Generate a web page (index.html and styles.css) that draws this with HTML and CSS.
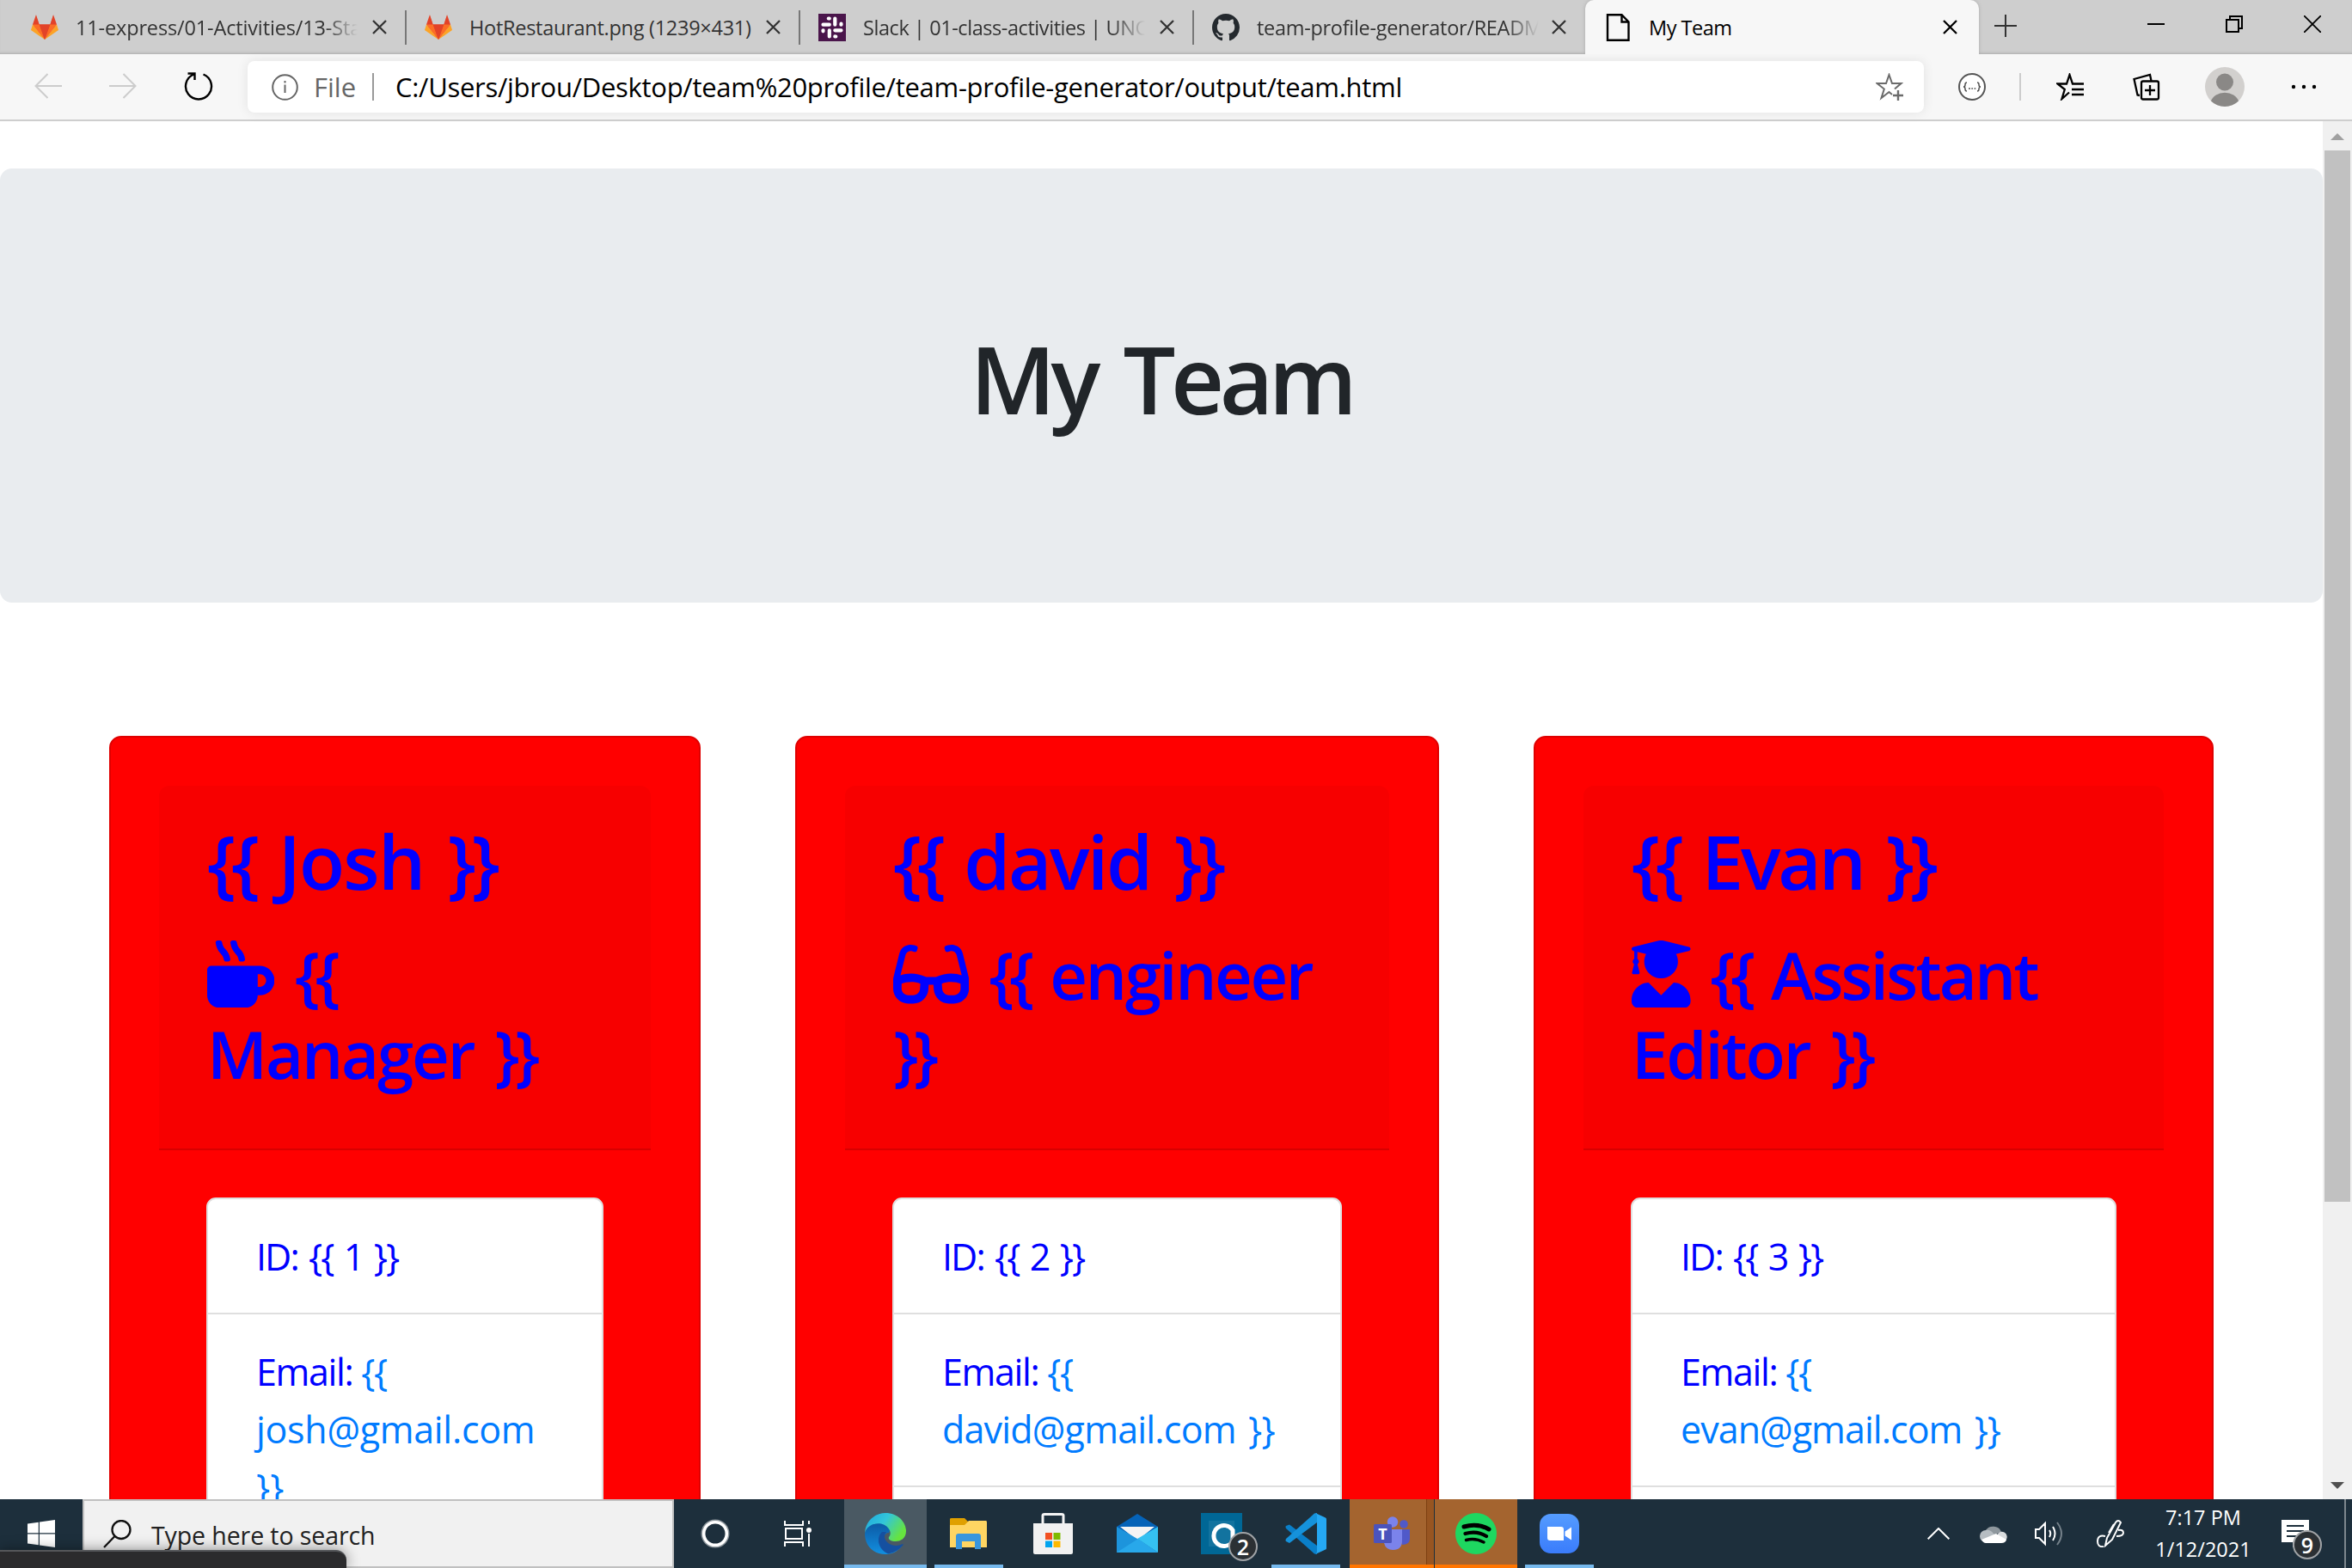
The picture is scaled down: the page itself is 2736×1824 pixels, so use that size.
FILE: index.html
```html
<!DOCTYPE html>
<html lang="en">
<head>
<meta charset="utf-8">
<title>My Team</title>
<link rel="stylesheet" href="styles.css">
</head>
<body>
<svg class="defs" aria-hidden="true">
  <defs>
    <symbol id="tanuki" viewBox="0 0 32 29">
      <path fill="#e24329" d="M6 0L9.800 11.500H22.200L26 0L30 11.500L16 29L2 11.500Z"/>
      <path fill="#cecece" d="M6.500 0L10.200 11H21.800L25.500 0Z"/>
      <path fill="#fca326" d="M2 11.500L0 18L16 29L30 11.500L32 18L16 29Z"/>
      <path fill="#fc6d26" d="M2 11.500H9.800L16 29ZM30 11.500H22.200L16 29Z"/>
      <path fill="#e24329" d="M9.800 11.500H22.200L16 29Z"/>
    </symbol>
    <symbol id="cross" viewBox="0 0 17 17"><path d="M1 1L16 16M16 1L1 16" fill="none" stroke="currentColor" stroke-width="2.300"/></symbol>
    <linearGradient id="edgeTop" x1="0" x2="1" y1="0" y2=".5"><stop offset="0" stop-color="#1ca7e0"/><stop offset=".5" stop-color="#33c6d9"/><stop offset="1" stop-color="#66e33f"/></linearGradient>
    <linearGradient id="edgeMid" x1="0" x2="0" y1="0" y2="1"><stop offset="0" stop-color="#0c59a4"/><stop offset="1" stop-color="#1290e0"/></linearGradient>
    <linearGradient id="zoomBg" x1="0" x2="0" y1="0" y2="1"><stop offset="0" stop-color="#559cff"/><stop offset="1" stop-color="#3a7cfb"/></linearGradient>
  </defs>
</svg>
<div class="screen">
  <header class="tabs">
    <div class="tab">
      <svg class="favicon" width="32" height="29"><use href="#tanuki"/></svg>
      <span class="tab-title fade t1">11-express/01-Activities/13-Sta</span>
      <svg class="close" width="17" height="17"><use href="#cross"/></svg>
    </div>
    <div class="tab">
      <svg class="favicon" width="32" height="29"><use href="#tanuki"/></svg>
      <span class="tab-title t2">HotRestaurant.png (1239×431)</span>
      <svg class="close" width="17" height="17"><use href="#cross"/></svg>
    </div>
    <div class="tab">
      <svg class="favicon" width="32" height="32" viewBox="0 0 32 32"><rect width="32" height="32" fill="#4a154b"/><g stroke="#fff" stroke-width="4.200" stroke-linecap="round"><path d="M12.800 12.700H5.500M19.300 5.500v7.200M19.300 19.300h7.200M12.800 26.500v-7.200M12.800 5.500v.1M26.500 12.700h-.1M19.300 26.500v-.1M5.500 19.300h.1M12.800 5.500h-1M26.500 12.700v-1M19.300 26.500h1M5.500 19.300v1"/></g></svg>
      <span class="tab-title fade t3">Slack | 01-class-activities | UNC</span>
      <svg class="close" width="17" height="17"><use href="#cross"/></svg>
    </div>
    <div class="tab last">
      <svg class="favicon" width="32" height="32" viewBox="0 0 16 16"><path fill="#24292e" d="M8 0C3.580 0 0 3.580 0 8c0 3.540 2.290 6.530 5.470 7.590.4.070.55-.17.55-.38 0-.19-.01-.82-.01-1.490-2.010.37-2.530-.49-2.690-.94-.09-.23-.48-.94-.82-1.130-.28-.15-.68-.52-.01-.53.63-.01 1.080.58 1.230.82.72 1.210 1.870.87 2.330.66.070-.52.28-.87.51-1.070-1.780-.2-3.640-.89-3.640-3.950 0-.87.31-1.590.82-2.150-.08-.2-.36-1.020.08-2.120 0 0 .67-.21 2.200.82.64-.18 1.320-.27 2-.27s1.360.09 2 .27c1.530-1.040 2.200-.82 2.200-.82.44 1.100.16 1.920.08 2.120.51.56.82 1.270.82 2.150 0 3.070-1.870 3.750-3.650 3.950.29.25.54.73.54 1.480 0 1.070-.01 1.930-.01 2.200 0 .21.15.46.55.38A8.010 8.010 0 0 0 16 8c0-4.420-3.580-8-8-8z"/></svg>
      <span class="tab-title fade t4">team-profile-generator/READM</span>
      <svg class="close" width="17" height="17"><use href="#cross"/></svg>
    </div>
    <div class="tab active">
      <svg class="favicon" width="32" height="32" viewBox="0 0 32 32" fill="none" stroke="#000" stroke-width="2.400"><path d="M4 1.200H20.500L28.500 9.500V30.800H4ZM20.500 1.200V9.500H28.500"/></svg>
      <span class="tab-title t5">My Team</span>
      <svg class="close" width="17" height="17"><use href="#cross"/></svg>
    </div>
    <svg class="new-tab" width="26" height="26" viewBox="0 0 26 26" stroke="#333" stroke-width="2"><path d="M13 0V26M0 13H26"/></svg>
    <div class="window-buttons">
      <svg width="20" height="20" viewBox="0 0 20 20" stroke="#000" stroke-width="2"><path d="M0 10H20"/></svg>
      <svg width="20" height="20" viewBox="0 0 20 20" fill="none" stroke="#000" stroke-width="2"><path d="M1 5H15V19H1ZM5 5V1H19V15H15"/></svg>
      <svg width="20" height="20" viewBox="0 0 20 20" stroke="#000" stroke-width="1.800"><path d="M0 0L20 20M20 0L0 20"/></svg>
    </div>
  </header>

  <nav class="toolbar">
    <div class="nav-buttons">
      <svg width="32" height="32" viewBox="0 0 32 32" fill="none" stroke="#ccc" stroke-width="2"><path d="M32 15H1M15.500 1L1.500 15L15.500 29"/></svg>
      <svg width="32" height="32" viewBox="0 0 32 32" fill="none" stroke="#ccc" stroke-width="2"><path d="M0 15H31M16.500 1L30.500 15L16.500 29"/></svg>
      <svg width="34" height="34" viewBox="0 0 34 34" fill="none" stroke="#000" stroke-width="2.400"><path d="M22.500 2.500A15 15 0 1 1 11.500 2.500M4.500 1.500H12.500V9"/></svg>
    </div>
    <div class="address">
      <svg class="info" width="31" height="31" viewBox="0 0 31 31" fill="none" stroke="#666" stroke-width="2"><circle cx="15.500" cy="15.500" r="14.300"/><path d="M15.500 12.500V22M15.500 8V10.500"/></svg>
      <span class="scheme">File</span>
      <i class="rule"></i>
      <span class="url">C:/Users/jbrou/Desktop/team%20profile/team-profile-generator/output/team.html</span>
      <svg class="fav" width="32" height="32" viewBox="0 0 32 32" fill="none" stroke="#6b6b6b" stroke-width="2"><path d="M19 25L15.500 22L6.500 29L9.800 18.500L1.500 12H12L15.500 2L19 12H29.500L22 18.500"/><path d="M26 20V32M20 26H32" stroke-width="2.400"/></svg>
    </div>
    <div class="actions">
      <svg class="braces" width="32" height="32" viewBox="0 0 32 32" fill="none" stroke="#555" stroke-width="2"><circle cx="16" cy="16" r="15" fill="#fff"/><path d="M10 11Q8 11 8 13.500Q8 16 6 16Q8 16 8 18.500Q8 21 10 21M22 11Q24 11 24 13.500Q24 16 26 16Q24 16 24 18.500Q24 21 22 21" stroke-width="1.500"/><path d="M12 18H14M15.300 18H17M18.500 18H20.300" stroke-width="1.600"/></svg>
      <i class="rule light"></i>
      <svg class="favorites" width="32" height="32" viewBox="0 0 32 32" fill="none" stroke="#000" stroke-width="2.300"><path d="M15 22.500L6.500 30L9.800 19L1.500 12.500H12L15.500 2L19 12.500H32M18 19H32M18 25H32"/></svg>
      <svg class="collections" width="32" height="32" viewBox="0 0 32 32" fill="none" stroke="#000" stroke-width="2.300"><rect x="10" y="9.500" width="20" height="21" rx="2"/><path d="M20 14V26M14 20H26M8 26L5.500 25.500L1.500 7L20 2L21.500 9"/></svg>
      <svg class="avatar" width="46" height="46" viewBox="0 0 46 46"><circle cx="23" cy="23" r="23" fill="#d2d0ce"/><circle cx="23" cy="17.500" r="10" fill="#8a8886"/><path fill="#8a8886" d="M7 39.500A16.500 13 0 0 1 39 39.500A23 23 0 0 1 7 39.500Z"/></svg>
      <svg class="more" width="30" height="6" viewBox="0 0 30 6"><circle cx="3" cy="3" r="2.200"/><circle cx="15" cy="3" r="2.200"/><circle cx="27" cy="3" r="2.200"/></svg>
    </div>
  </nav>

  <div class="viewport">
    <main class="page">
      <section class="jumbotron"><h1>My Team</h1></section>
      <section class="team">
        <article class="card">
          <div class="card-header">
            <h2 class="josh"><span class="b">{{</span> Josh <span class="b">}}</span></h2>
            <h3 class="manager"><svg class="role-icon mug" viewBox="0 0 512 512"><path d="M127.100 146.500c1.300 7.700 8 13.500 16 13.500h16.500c9.800 0 17.600-8.500 16.300-18-3.800-28.200-16.400-54.200-36.600-74.700-14.400-14.700-23.600-33.300-26.400-53.500C111.800 5.900 105 0 96.800 0H80.400C70.600 0 63 8.500 64.100 18c3.900 31.900 18 61.300 40.600 84.400 12 12.200 19.700 27.500 22.400 44.100zm112 0c1.300 7.700 8 13.500 16 13.500h16.500c9.800 0 17.600-8.500 16.300-18-3.800-28.200-16.400-54.200-36.600-74.700-14.400-14.700-23.600-33.300-26.400-53.500C223.800 5.900 217 0 208.800 0h-16.400c-9.800 0-17.500 8.500-16.300 18 3.900 31.900 18 61.300 40.600 84.400 12 12.200 19.700 27.500 22.400 44.100zM400 192H32c-17.700 0-32 14.300-32 32v192c0 53 43 96 96 96h192c53 0 96-43 96-96h16c61.800 0 112-50.200 112-112s-50.200-112-112-112zm0 160h-16v-96h16c26.500 0 48 21.500 48 48s-21.500 48-48 48z"/></svg> <span class="b">{{</span><br>Manager <span class="b">}}</span></h3>
          </div>
          <ul class="list">
            <li><span class="id">ID: {{ 1 }}</span></li>
            <li><span class="mail-label">Email: <a>{{</a></span><br><a class="josh-mail">josh@gmail.com</a><br><a>}}</a></li>
          </ul>
        </article>
        <article class="card">
          <div class="card-header">
            <h2 class="david"><span class="b">{{</span> david <span class="b">}}</span></h2>
            <h3 class="engineer"><svg class="role-icon glasses" viewBox="0 0 576 512"><path d="M574.100 280.370L528.750 98.660c-5.910-23.700-21.590-44.050-43-55.810-21.440-11.730-46.970-14.110-70.190-6.330l-15.250 5.080c-8.390 2.790-12.920 11.860-10.120 20.240l5.060 15.180c2.790 8.380 11.850 12.910 20.230 10.120l13.180-4.390c10.870-3.620 23-3.570 33.160 1.730 10.290 5.370 17.570 14.560 20.370 25.820l38.460 153.820c-22.190-6.810-49.790-12.460-81.200-12.460-34.770 0-73.980 7.020-114.850 26.740h-73.180c-40.870-19.740-80.080-26.750-114.860-26.750-31.420 0-59.020 5.650-81.210 12.460l38.460-153.830c2.790-11.250 10.090-20.450 20.380-25.810 10.160-5.300 22.280-5.350 33.150-1.730l13.170 4.390c8.380 2.790 17.440-1.740 20.230-10.120l5.060-15.180c2.800-8.380-1.730-17.450-10.120-20.240l-15.250-5.080c-23.220-7.780-48.750-5.410-70.190 6.330-21.410 11.770-37.090 32.110-43 55.800L1.900 280.370A64.218 64.218 0 0 0 0 295.860v70.250C0 429.010 51.580 480 115.200 480h37.120c60.280 0 110.370-45.940 114.880-105.370l2.930-38.630h35.750l2.930 38.630C313.310 434.060 363.400 480 423.680 480h37.120c63.620 0 115.200-50.990 115.200-113.880v-70.250c0-5.230-.64-10.430-1.900-15.500zm-370.720 89.420c-1.970 25.910-24.400 46.210-51.060 46.210H115.200C86.970 416 64 393.620 64 366.110v-37.540c18.120-6.490 43.420-12.920 72.580-12.920 23.860 0 47.260 4.330 69.930 12.920l-3.130 41.220zM512 366.120c0 27.510-22.970 49.880-51.200 49.880h-37.120c-26.670 0-49.100-20.300-51.060-46.210l-3.130-41.220c22.670-8.590 46.080-12.920 69.950-12.920 29.120 0 54.430 6.440 72.550 12.930v37.540z"/></svg> <span class="b">{{</span> engineer<br><span class="b">}}</span></h3>
          </div>
          <ul class="list">
            <li><span class="id">ID: {{ 2 }}</span></li>
            <li><span class="mail-label">Email: <a>{{</a></span><br><a class="david-mail">david@gmail.com }}</a></li>
            <li></li>
          </ul>
        </article>
        <article class="card">
          <div class="card-header">
            <h2 class="evan"><span class="b">{{</span> Evan <span class="b">}}</span></h2>
            <h3 class="editor"><svg class="role-icon graduate" viewBox="0 0 448 512"><path d="M319.400 320.600L224 416l-95.400-95.400C57.100 323.700 0 382.200 0 454.400v9.600c0 26.500 21.500 48 48 48h352c26.500 0 48-21.500 48-48v-9.600c0-72.200-57.100-130.700-128.600-133.800zM13.600 79.800l6.400 1.500v58.400c-7 4.200-12 11.500-12 20.300 0 8.400 4.600 15.400 11.100 19.700L3.500 242c-1.700 6.900 2.100 14 7.600 14h41.800c5.500 0 9.300-7.100 7.600-14l-15.600-62.300C51.400 175.400 56 168.400 56 160c0-8.800-5-16.100-12-20.300V87.100l66 15.900c-8.600 17.200-14 36.400-14 57 0 70.700 57.300 128 128 128s128-57.300 128-128c0-20.600-5.300-39.800-14-57l96.300-23.200c18.200-4.400 18.200-27.100 0-31.500l-190.400-46c-13-3.100-26.700-3.100-39.700 0L13.600 48.200c-18.100 4.400-18.100 27.200 0 31.600z"/></svg> <span class="b">{{</span> Assistant<br><span class="line2">Editor <span class="b">}}</span></span></h3>
          </div>
          <ul class="list">
            <li><span class="id">ID: {{ 3 }}</span></li>
            <li><span class="mail-label">Email: <a>{{</a></span><br><a class="evan-mail">evan@gmail.com }}</a></li>
            <li></li>
          </ul>
        </article>
      </section>
    </main>
    <aside class="scrollbar">
      <svg width="16" height="8" viewBox="0 0 16 8"><path fill="#a0a0a0" d="M8 0L16 8H0Z"/></svg>
      <div class="thumb"></div>
      <svg class="down" width="16" height="8" viewBox="0 0 16 8"><path fill="#505050" d="M0 0H16L8 8Z"/></svg>
    </aside>
  </div>

  <footer class="taskbar">
    <div class="start"><svg width="32" height="32" viewBox="0 0 32 32" fill="#fff"><path d="M0 4.500L12.800 2.700V15.300H0ZM14 2.500L32 0V15.300H14ZM0 16.500H12.800V29.300L0 27.500ZM14 16.500H32V32L14 29.500Z"/></svg></div>
    <div class="search">
      <svg width="33" height="33" viewBox="0 0 33 33" fill="none" stroke="#111" stroke-width="2.300"><circle cx="21" cy="11.500" r="10.500"/><path d="M13.500 19L1 32"/></svg>
      <span>Type here to search</span>
    </div>
    <div class="task plain"><svg width="34" height="34" viewBox="0 0 34 34" fill="none"><circle cx="17" cy="17" r="15" stroke="#8e979d" stroke-width="3"/><circle cx="17" cy="17" r="13.300" stroke="#fff" stroke-width="3.500"/></svg></div>
    <div class="task plain"><svg width="33" height="32" viewBox="0 0 33 32" fill="none" stroke="#fff" stroke-width="2"><path d="M1 1V6H22V1M2 10H21V22H2ZM1 31V26H22V31M29 1V5M29 16V31"/><circle cx="29" cy="12" r="3" fill="#fff" stroke="none"/></svg></div>
    <div class="task current"><svg width="48" height="48" viewBox="0 0 48 48"><path fill="url(#edgeMid)" d="M0 24C2 14 12 10 20 12C30 14 30 20 28 23C22 23 20 31 26 37C33 43 42 38 44 37C38 46 30 48 24 48C10 48 0 38 0 24Z"/><path fill="#1550a0" d="M20 22C13 28 15 42 27 47.500C35 46 41 42 45 36.500C43 35 39 40 31 37C23 34 21 27 25 22Z"/><path fill="url(#edgeTop)" d="M0 23C1 9 12 0 24 0C39 0 48 11 48 21C48 30 41 33 36 33C29 33 27 30 28 28C32 24 29 15 19 12.500C10 11 2 16 0 23Z"/></svg></div>
    <div class="task open"><svg width="44" height="36" viewBox="0 0 44 36"><path fill="#e0a000" d="M0 1Q0 0 2 0H17L21 4V8H0Z"/><path fill="#ffd562" d="M0 8H17L22 3H42Q43 3 43 5V34H0Z"/><path fill="#3a96dd" d="M7 36V21Q7 18 10 18H33Q36 18 36 21V36H29V27H14V36Z"/></svg></div>
    <div class="task"><svg width="48" height="48" viewBox="0 0 48 48"><path d="M12 16V3Q12 1.500 14 1.500H34Q36 1.500 36 3V16" fill="none" stroke="#f4f4f4" stroke-width="3"/><path fill="#f1f1f1" d="M1 12H47V46Q47 48 45 48H3Q1 48 1 46Z"/><path fill="#f25022" d="M15 23H23V31H15Z"/><path fill="#7fba00" d="M24.500 23H32.500V31H24.500Z"/><path fill="#00a4ef" d="M15 32.500H23V40H15Z"/><path fill="#ffb900" d="M24.500 32.500H32.500V40H24.500Z"/></svg></div>
    <div class="task"><svg width="48" height="46" viewBox="0 0 48 46"><path fill="#0563b8" d="M0 15L24 0L48 15V26H0Z"/><path fill="#f4f4f4" d="M4 15H44L24 31Z"/><path fill="#1d94dc" d="M0 15L24 29L48 45H0Z"/><path fill="#35c1f1" d="M48 15L24 29L48 45Z"/><path fill="#28a8ea" d="M0 45L25 29L48 45Z"/></svg></div>
    <div class="task notify"><svg width="48" height="48" viewBox="0 0 48 48"><rect width="48" height="48" fill="#006796"/><rect x="9" y="9" width="30" height="30" fill="#12739f"/><path d="M37 33A12 12 0 1 1 37 20V37" fill="none" stroke="#fff" stroke-width="5"/></svg><span class="badge">2</span></div>
    <div class="task open"><svg width="48" height="48" viewBox="0 0 48 48"><path fill="#0a7fc9" d="M1 15L5 13.500L37 38V48L34 47.500L1 18Q0 16 1 15Z"/><path fill="#1592db" d="M1 33L5 35L37 11V0L34 .5L1 30Q0 32 1 33Z"/><path fill="#25a8f3" d="M35 0L47 5.500Q48 6 48 7.500V41Q48 42 47 42.500L35 48Q37 47 37 45V3Q37 1 35 0Z"/></svg></div>
    <div class="task alert teams"><svg width="42" height="40" viewBox="0 0 42 40"><circle cx="35" cy="9" r="4.800" fill="#5059c9"/><circle cx="22" cy="6.500" r="6.200" fill="#7b83eb"/><path fill="#5059c9" d="M30 15H42V26Q42 33 33 33Z"/><path fill="#7b83eb" d="M12 15H33V28Q33 39 22.500 39Q14 39 12 31Z"/><rect y="9" width="21" height="22" rx="1.500" fill="#4b53bc"/><text class="teams-t" x="10.500" y="27" text-anchor="middle">T</text></svg></div>
    <div class="task alert spotify"><svg width="48" height="48" viewBox="0 0 48 48" fill="none" stroke="#000" stroke-linecap="round"><circle cx="24" cy="24" r="24" fill="#1ed760" stroke="none"/><path d="M10 16Q26 11.500 39 19" stroke-width="5"/><path d="M11.500 24Q25 20 36 27" stroke-width="4.200"/><path d="M12.500 31.500Q23 28.500 33 34" stroke-width="3.500"/></svg></div>
    <div class="task open"><svg width="46" height="46" viewBox="0 0 46 46"><rect width="46" height="46" rx="13" fill="url(#zoomBg)"/><path fill="#fff" d="M9 15H25Q28 15 28 18V31H12Q9 31 9 28ZM29.500 20.500L37 15.500V30.500L29.500 25.500Z"/></svg></div>
    <div class="tray">
      <svg class="chev" width="26" height="14" viewBox="0 0 26 14" fill="none" stroke="#fff" stroke-width="2"><path d="M.7 13.300L13 1L25.300 13.300"/></svg>
      <svg class="cloud" width="32" height="21" viewBox="0 0 32 21"><path fill="#8e979d" d="M7 6A10 9 0 0 1 25 8L16 12Z"/><path fill="#b6bdc2" d="M7 20A7 7 0 0 1 7 6Q12 5 16 10L20 12L5 20Z"/><path fill="#d9dcde" d="M20 12Q23 7 27 8A6 6 0 0 1 30 18Z"/><path fill="#fff" d="M2 17L19 10L31 17Q30 21 25 21H7Q4 21 2 17Z"/></svg>
      <svg class="sound" width="33" height="30" viewBox="0 0 33 30" fill="none" stroke="#fff" stroke-width="2"><path d="M1 10V20H5L12 27V3L5 10ZM17 11Q19.500 15 17 19M21 7Q26 15 21 23"/><path stroke="#75818a" d="M26 2Q36 15 26 28"/></svg>
      <svg class="pen" width="32" height="32" viewBox="0 0 32 32" fill="none" stroke="#fff" stroke-width="2"><path d="M10 30L12 21L22 3Q25 -1 28 3L18 23ZM14 15L20 5M10 19Q1 17 1 25Q1 32 8 31M25 12Q31 11 31 15Q31 19 23 19"/></svg>
      <div class="clock"><span>7:17 PM</span><span>1/12/2021</span></div>
      <div class="action-center"><svg width="32" height="32" viewBox="0 0 32 32"><path fill="#fff" d="M0 0H32V26H19L13 32V26H0Z"/><path d="M6 7H26M6 13H26M6 19H26" stroke="#1d2f3c" stroke-width="2"/></svg><span class="badge">9</span></div>
      <i class="peek"></i>
    </div>
    <div class="tooltip-edge"></div>
  </footer>
</div>
</body>
</html>
```
FILE: styles.css
```css
* { box-sizing: border-box; }
body { margin: 0; font-family: "Open Sans", "Noto Sans", sans-serif; }
svg { display: block; flex: none; }
.defs { position: absolute; width: 0; height: 0; }
.screen { width: 2736px; height: 1824px; display: flex; flex-direction: column; overflow: hidden; background: #fff; }

/* Tab strip */
.tabs { flex: none; height: 63px; display: flex; background: #cecece; padding-left: 15px; box-shadow: inset 0 -3px 3px -2px #aaa; }
.tab { width: 458px; height: 63px; display: flex; align-items: center; padding: 0 23px 0 21px; color: #333; background: linear-gradient(#777, #777) right 12px / 2px 40px no-repeat; }
.tab.last { width: 455px; padding-right: 22px; background: none; }
.tab.active { background: #f7f7f7; border-radius: 10px 10px 0 0; color: #000; padding: 0 25px 0 22px; box-shadow: 0 0 4px #aaa; clip-path: inset(0 -5px 0 -5px); }
.favicon { margin-right: 20px; }
.tab-title { width: 328px; height: 40px; line-height: 40px; font-size: 23.5px; white-space: nowrap; overflow: hidden; }
.fade { -webkit-mask-image: linear-gradient(90deg, #000 290px, transparent 328px); mask-image: linear-gradient(90deg, #000 290px, transparent 328px); }
.t1 { letter-spacing: -.15px; }
.t2 { letter-spacing: -.27px; }
.t3 { letter-spacing: -.43px; }
.t4 { letter-spacing: -.3px; }
.t5 { letter-spacing: -.5px; }
.close { margin-left: auto; }
.new-tab { margin: 17px 0 0 18px; }
.window-buttons { display: flex; gap: 71px; margin: 18px 36px 0 auto; }

/* Toolbar */
.toolbar { flex: none; height: 78px; display: flex; align-items: center; background: #f7f7f7; border-bottom: 2px solid #cecece; padding-left: 40px; }
.nav-buttons { flex: none; width: 248px; display: flex; align-items: center; gap: 55px; }
.address { flex: none; width: 1950px; height: 60px; display: flex; align-items: center; background: #fff; border-radius: 8px; padding: 0 24px 0 28px; box-shadow: 0 0 14px rgba(0, 0, 0, .09); font-size: 31px; line-height: 60px; }
.scheme { width: 45px; margin-left: 18px; color: #666; }
.rule { width: 2px; height: 32px; margin-left: 23px; background: #999; }
.rule.light { background: #ccc; margin-left: 39px; }
.url { margin-left: 25px; letter-spacing: -.29px; color: #000; white-space: nowrap; }
.fav { margin-left: auto; }
.actions { flex: none; display: flex; align-items: center; }
.braces { margin-left: 40px; }
.favorites { margin-left: 41px; }
.collections { margin-left: 57px; }
.avatar { margin-left: 52px; }
.more { margin-left: 54px; }

/* Document area */
.viewport { flex: none; height: 1603px; display: flex; overflow: hidden; }
.page { width: 2702px; }
.jumbotron { height: 505px; margin-top: 55px; padding-top: 178px; background: #e9ecef; border-radius: 14px; text-align: center; }
h1, h2, h3 { margin: 0; font-weight: 600; white-space: nowrap; word-spacing: 6px; }
h1 { font-size: 108px; line-height: 134px; letter-spacing: -5.5px; word-spacing: 9px; color: #212529; }
.team { display: grid; grid-template-columns: 688px 749px 791px; column-gap: 110px; margin-top: 155px; padding-left: 127px; color: #00f; }
.card { height: 1100px; padding: 56px; background: #f00; border: 2px solid #df0000; border-radius: 14px; }
.card-header { height: 424px; padding: 34px 56px; background: #f70000; border-bottom: 2px solid #d80000; border-radius: 12px 12px 0 0; }
h2 { font-size: 87px; line-height: 107px; }
h3 { margin-top: 33px; font-size: 76px; line-height: 92px; }
.josh { letter-spacing: -1.8px; }
.david { letter-spacing: -2.4px; }
.evan { letter-spacing: -3.1px; }
.manager, .line2 { letter-spacing: -2.1px; }
.engineer { letter-spacing: -2.4px; }
.editor { letter-spacing: -2.8px; }
.b { letter-spacing: -5.5px; }
.role-icon { display: inline-block; height: 78.4px; vertical-align: -9px; fill: #00f; }
.mug { width: 78.4px; }
.glasses { width: 88.2px; }
.graduate { width: 68.6px; }
.list { list-style: none; height: 700px; margin: 55px 55px 0; padding: 0; background: #fff; border: 2px solid #dfdfdf; border-radius: 11px; font-size: 43px; line-height: 67px; white-space: nowrap; }
.list li { padding: 33px 56px 32px; border-bottom: 2px solid #dfdfdf; }
.list a { color: #007bff; }
.id { letter-spacing: -1.9px; word-spacing: 3px; }
.mail-label { letter-spacing: -1.35px; }
.josh-mail { letter-spacing: -.3px; }
.david-mail { letter-spacing: -.8px; word-spacing: 4px; }
.evan-mail { letter-spacing: -.95px; word-spacing: 4px; }
.scrollbar { width: 34px; display: flex; flex-direction: column; align-items: center; background: #f0f0f0; padding: 14px 0 12px; }
.thumb { width: 30px; height: 1223px; margin-top: 12px; background: #c1c1c1; }
.down { margin-top: auto; }

/* Taskbar */
.taskbar { position: relative; flex: none; height: 80px; display: flex; background: #1d2f3c; }
.start { width: 96px; padding: 24px 32px; }
.search { width: 688px; display: flex; background: #f1f1f1; border: 2px solid #c0c0c0; padding: 22px 0 0 22px; font-size: 28.5px; line-height: 36px; color: #222; }
.search span { margin-left: 23px; letter-spacing: -.1px; }
.task { position: relative; width: 98px; display: flex; align-items: center; justify-content: center; border-bottom: 4px solid transparent; padding-top: 4px; }
.task.plain { width: 96px; }
.task.plain + .task.current { margin-left: 6px; width: 96px; }
.task.current { background: #4a5963; border-bottom-color: #76b9ed; }
.task.open::after { content: ""; position: absolute; left: 9px; right: 9px; bottom: -4px; height: 4px; background: #76b9ed; }
.task.open { width: 98px; }
.task.alert { background: #a4642f; border-bottom-color: #ff7500; }
.task.teams { width: 98px; margin-left: 2px; box-shadow: inset -8px 0 #985521, inset -9px 0 #7d4012; }
.task.spotify { width: 96px; margin-left: 1px; }
.teams-t { font: 700 18px "Open Sans", sans-serif; fill: #fff; }
.badge { position: absolute; width: 34px; height: 34px; border: 2px solid #a0a3a6; border-radius: 50%; background: #2b3034; color: #fff; font-size: 25px; font-weight: 600; line-height: 30px; text-align: center; }
.notify .badge { left: 57px; top: 38px; }
.tray { margin-left: auto; display: flex; align-items: center; }
.cloud { margin-left: 35px; }
.sound { margin-left: 32px; }
.pen { margin-left: 39px; }
.clock { width: 110px; margin-left: 37px; display: flex; flex-direction: column; align-items: center; font-size: 23.5px; line-height: 37px; color: #fff; }
.action-center { position: relative; margin-left: 36px; }
.action-center .badge { left: 13px; top: 12px; }
.peek { width: 2px; height: 80px; margin: 0 7px 0 41px; background: #7d878e; }
.tooltip-edge { position: absolute; left: 0; bottom: 0; width: 403px; height: 21px; background: #2b2b2d; border-top: 2px solid #55575a; border-radius: 0 12px 0 0; box-shadow: 0 0 16px rgba(0, 0, 0, .45); }
```
